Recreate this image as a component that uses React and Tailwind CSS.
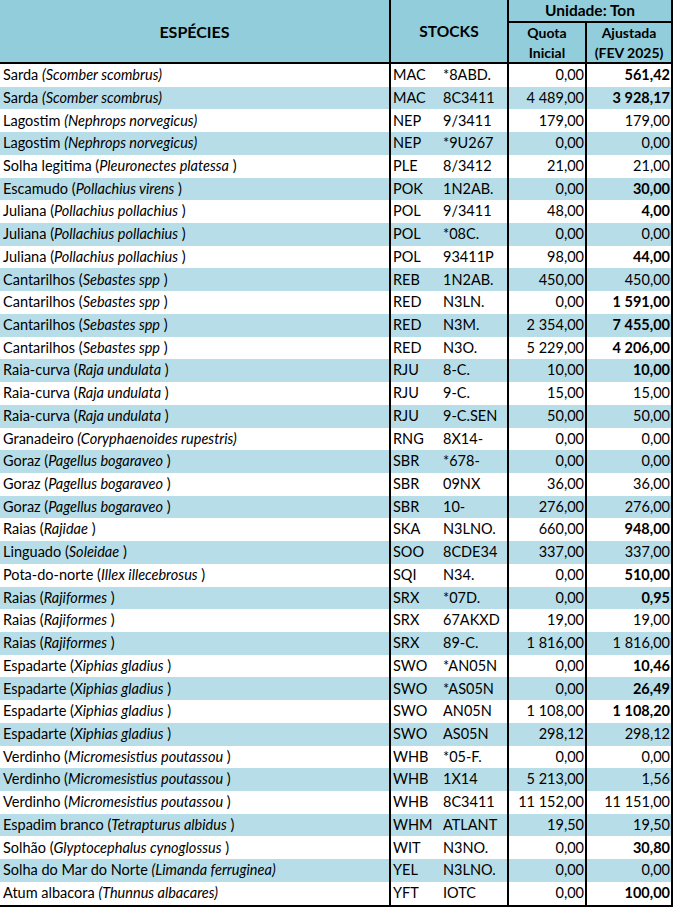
import React from "react";

const rows = [
  ["Sarda", "Scomber scombrus", true, "MAC", "*8ABD.", "0,00", "561,42", true],
  ["Sarda", "Scomber scombrus", true, "MAC", "8C3411", "4 489,00", "3 928,17", true],
  ["Lagostim", "Nephrops norvegicus", true, "NEP", "9/3411", "179,00", "179,00", false],
  ["Lagostim", "Nephrops norvegicus", true, "NEP", "*9U267", "0,00", "0,00", false],
  ["Solha legitima", "Pleuronectes platessa", false, "PLE", "8/3412", "21,00", "21,00", false],
  ["Escamudo", "Pollachius virens", false, "POK", "1N2AB.", "0,00", "30,00", true],
  ["Juliana", "Pollachius pollachius", false, "POL", "9/3411", "48,00", "4,00", true],
  ["Juliana", "Pollachius pollachius", false, "POL", "*08C.", "0,00", "0,00", false],
  ["Juliana", "Pollachius pollachius", false, "POL", "93411P", "98,00", "44,00", true],
  ["Cantarilhos", "Sebastes spp", false, "REB", "1N2AB.", "450,00", "450,00", false],
  ["Cantarilhos", "Sebastes spp", false, "RED", "N3LN.", "0,00", "1 591,00", true],
  ["Cantarilhos", "Sebastes spp", false, "RED", "N3M.", "2 354,00", "7 455,00", true],
  ["Cantarilhos", "Sebastes spp", false, "RED", "N3O.", "5 229,00", "4 206,00", true],
  ["Raia-curva", "Raja undulata", false, "RJU", "8-C.", "10,00", "10,00", true],
  ["Raia-curva", "Raja undulata", false, "RJU", "9-C.", "15,00", "15,00", false],
  ["Raia-curva", "Raja undulata", false, "RJU", "9-C.SEN", "50,00", "50,00", false],
  ["Granadeiro", "Coryphaenoides rupestris", true, "RNG", "8X14-", "0,00", "0,00", false],
  ["Goraz", "Pagellus bogaraveo", false, "SBR", "*678-", "0,00", "0,00", false],
  ["Goraz", "Pagellus bogaraveo", false, "SBR", "09NX", "36,00", "36,00", false],
  ["Goraz", "Pagellus bogaraveo", false, "SBR", "10-", "276,00", "276,00", false],
  ["Raias", "Rajidae", false, "SKA", "N3LNO.", "660,00", "948,00", true],
  ["Linguado", "Soleidae", false, "SOO", "8CDE34", "337,00", "337,00", false],
  ["Pota-do-norte", "Illex illecebrosus", false, "SQI", "N34.", "0,00", "510,00", true],
  ["Raias", "Rajiformes", false, "SRX", "*07D.", "0,00", "0,95", true],
  ["Raias", "Rajiformes", false, "SRX", "67AKXD", "19,00", "19,00", false],
  ["Raias", "Rajiformes", false, "SRX", "89-C.", "1 816,00", "1 816,00", false],
  ["Espadarte", "Xiphias gladius", false, "SWO", "*AN05N", "0,00", "10,46", true],
  ["Espadarte", "Xiphias gladius", false, "SWO", "*AS05N", "0,00", "26,49", true],
  ["Espadarte", "Xiphias gladius", false, "SWO", "AN05N", "1 108,00", "1 108,20", true],
  ["Espadarte", "Xiphias gladius", false, "SWO", "AS05N", "298,12", "298,12", false],
  ["Verdinho", "Micromesistius poutassou", false, "WHB", "*05-F.", "0,00", "0,00", false],
  ["Verdinho", "Micromesistius poutassou", false, "WHB", "1X14", "5 213,00", "1,56", false],
  ["Verdinho", "Micromesistius poutassou", false, "WHB", "8C3411", "11 152,00", "11 151,00", false],
  ["Espadim branco", "Tetrapturus albidus", false, "WHM", "ATLANT", "19,50", "19,50", false],
  ["Solhão", "Glyptocephalus cynoglossus", false, "WIT", "N3NO.", "0,00", "30,80", true],
  ["Solha do Mar do Norte", "Limanda ferruginea", true, "YEL", "N3LNO.", "0,00", "0,00", false],
  ["Atum albacora", "Thunnus albacares", true, "YFT", "IOTC", "0,00", "100,00", true],
];

const Species = ({ name, sci, italicParens }) =>
  italicParens ? (
    <span>
      {name} <i>({sci})</i>
    </span>
  ) : (
    <span>
      {name} (<i>{sci}</i> )
    </span>
  );

export default function App() {
  return (
    <div className="w-[673px] h-[909px] bg-white text-[14.5px] text-black font-['Lato',sans-serif] leading-none">
      {/* Header */}
      <div className="flex h-[64px] bg-[#92CDDC] border-b-2 border-black font-bold">
        <div className="w-[389px] flex items-center justify-center text-[16px] pt-[1px]">ESPÉCIES</div>
        <div className="w-[120px] border-l-2 border-r-2 border-black flex items-center justify-center text-[15.5px] pt-[1px]">
          STOCKS
        </div>
        <div className="w-[164px] flex flex-col border-r-2 border-black">
          <div className="h-[23px] border-b-2 border-black flex items-center justify-center text-[15.5px]">Unidade: Ton</div>
          <div className="flex flex-1">
            <div className="w-[78px] border-r-2 border-black flex flex-col items-center justify-center gap-[6px] text-[14px]">
              <span>Quota</span>
              <span>Inicial</span>
            </div>
            <div className="flex-1 flex flex-col items-center justify-center gap-[6px] text-[14px]">
              <span>Ajustada</span>
              <span>(FEV 2025)</span>
            </div>
          </div>
        </div>
      </div>

      {/* Body */}
      <div className="border-b-2 border-black">
        {rows.map((r, i) => (
          <div key={i} className={`flex h-[22.73px] ${i % 2 === 1 ? "bg-[#B7DEE8]" : "bg-white"}`}>
            <div className="w-[389px] flex items-center pl-[3px] whitespace-nowrap">
              <Species name={r[0]} sci={r[1]} italicParens={r[2]} />
            </div>
            <div className="w-[120px] border-l-2 border-r-2 border-black flex items-center pl-[2px]">
              <span className="w-[50px]">{r[3]}</span>
              <span>{r[4]}</span>
            </div>
            <div className="w-[78px] border-r-2 border-black flex items-center justify-end pr-[1px]">{r[5]}</div>
            <div className={`w-[86px] border-r-2 border-black flex items-center justify-end pr-[1px] ${r[7] ? "font-bold" : ""}`}>
              {r[6]}
            </div>
          </div>
        ))}
      </div>
    </div>
  );
}
